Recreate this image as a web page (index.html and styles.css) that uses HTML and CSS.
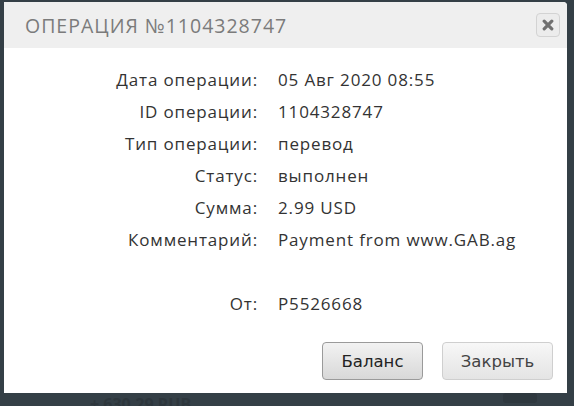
FILE: index.html
```
<!DOCTYPE html>
<html lang="ru">
<head>
<meta charset="utf-8">
<link rel="stylesheet" href="styles.css">
</head>
<body>
<div class="page">
  <div class="dialog">
    <div class="header">
      <div class="title">ОПЕРАЦИЯ №1104328747</div>
      <button class="close" aria-label="close">
        <svg width="12" height="12" viewBox="0 0 12 12"><path d="M2.2 2.2 L9.8 9.8 M9.8 2.2 L2.2 9.8" stroke="#707070" stroke-width="3.2" stroke-linecap="round"/></svg>
      </button>
    </div>
    <div class="content">
      <div class="details">
        <div class="label">Дата операции:</div><div class="value">05 Авг 2020 08:55</div>
        <div class="label">ID операции:</div><div class="value">1104328747</div>
        <div class="label">Тип операции:</div><div class="value">перевод</div>
        <div class="label">Статус:</div><div class="value">выполнен</div>
        <div class="label">Сумма:</div><div class="value">2.99 USD</div>
        <div class="label">Комментарий:</div><div class="value">Payment from www.GAB.ag</div>
        <div class="label spacer"></div><div class="value spacer"></div>
        <div class="label">От:</div><div class="value">P5526668</div>
      </div>
    </div>
    <div class="buttons">
      <button class="btn btn-primary">Баланс</button>
      <button class="btn btn-close">Закрыть</button>
    </div>
  </div>
  <div class="under">
    <span class="under-left">+ 630.29 RUB</span>
    <span class="under-right"></span>
  </div>
</div>
</body>
</html>
```
FILE: styles.css
```
html, body {
  margin: 0;
  padding: 0;
}
body {
  background: #343f46;
  width: 574px;
  height: 406px;
  overflow: hidden;
  font-family: "Open Sans", "Liberation Sans", sans-serif;
}
.page {
  padding: 2px 7px 0 4px;
}
.dialog {
  background: #fff;
  height: 391px;
  border-radius: 0 4px 0 0;
  display: flex;
  flex-direction: column;
  box-sizing: border-box;
}
.header {
  height: 46px;
  background: #efefef;
  display: flex;
  align-items: center;
  justify-content: space-between;
  padding: 0 7px 0 21px;
  border-radius: 0 4px 0 0;
}
.title {
  font-family: "Open Sans", sans-serif;
  font-size: 19.5px;
  color: #7b7b7b;
  letter-spacing: 1px;
  padding-top: 1px;
}
.close {
  width: 24px;
  height: 24px;
  border: 1px solid #d3d3d3;
  border-radius: 4px;
  background: #ececec;
  display: flex;
  align-items: center;
  justify-content: center;
  padding: 0;
  margin-top: -1px;
}
.content {
  flex: 1;
  padding-top: 16px;
}
.details {
  display: grid;
  grid-template-columns: 254px auto;
  column-gap: 20px;
  grid-auto-rows: 32px;
  font-size: 17px;
  letter-spacing: 0.85px;
  color: #333;
}
.label {
  text-align: right;
  line-height: 32px;
}
.value {
  line-height: 32px;
}
.details .spacer {
  height: 28px;
  line-height: 28px;
}
.buttons {
  display: flex;
  justify-content: flex-end;
  gap: 19px;
  padding: 0 14px 13px 0;
}
.btn {
  height: 38px;
  padding: 0 16px;
  font-family: "DejaVu Sans", Verdana, sans-serif;
  font-size: 16.5px;
  border-radius: 4px;
}
.btn-primary {
  width: 101px;
  color: #222;
  border: 1px solid #9a9a9a;
  background: linear-gradient(#f2f2f2, #d8d8d8);
}
.btn-close {
  width: 111px;
  color: #444;
  border: 1px solid #cfcfcf;
  background: linear-gradient(#f7f7f7, #e4e4e4);
}
.under {
  display: flex;
  justify-content: space-between;
  padding: 0 30px 0 86px;
  height: 13px;
  overflow: hidden;
}
.under-left {
  font-size: 16px;
  color: #2d363c;
  line-height: 22px;
  font-weight: bold;
}
.under-right {
  width: 34px;
  height: 10px;
  background: #2e383e;
  border-radius: 3px;
}
```
